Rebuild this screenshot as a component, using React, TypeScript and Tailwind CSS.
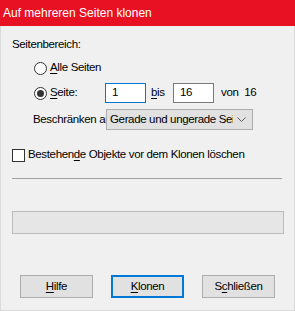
import React from "react";

const U = ({ children }: { children: React.ReactNode }) => (
  <span className="underline underline-offset-2 decoration-1">{children}</span>
);

export default function App() {
  return (
    <div
      className="w-[295px] h-[311px] bg-[#f0f0f0] flex flex-col text-[11.5px] tracking-[-0.35px] text-black leading-none border-x border-b border-[#dadada]"
      style={{ fontFamily: '"Liberation Sans", Arial, sans-serif' }}
    >
      <div className="h-[26px] bg-[#e81123] -mx-px flex items-center pl-[3px] text-white text-[12px] tracking-normal">
        Auf mehreren Seiten klonen
      </div>
      <div className="flex flex-col pl-[11px] pr-[11px]">
        <div className="mt-[12px] h-[13px] flex items-center">Seitenbereich:</div>
        <div className="mt-[10px] ml-[22px] flex items-center h-[14px]">
          <span className="w-[13px] h-[13px] rounded-full border border-[#333] bg-white" />
          <span className="ml-[3px]"><U>A</U>lle Seiten</span>
        </div>
        <div className="mt-[8px] ml-[22px] flex items-center h-[20px]">
          <span className="w-[13px] h-[13px] rounded-full border border-[#333] bg-white flex items-center justify-center">
            <span className="w-[7px] h-[7px] rounded-full bg-[#333]" />
          </span>
          <span className="ml-[3px] w-[55px]"><U>S</U>eite:</span>
          <div className="w-[41px] h-[20px] border border-[#0078d7] bg-white flex items-center pl-[6px]">1</div>
          <span className="ml-[5px] w-[21px]"><U>b</U>is</span>
          <div className="ml-[1px] w-[41px] h-[20px] border border-[#7a7a7a] bg-white flex items-center pl-[6px]">16</div>
          <span className="ml-[7px]">von&nbsp; 16</span>
        </div>
        <div className="mt-[6px] ml-[21px] flex items-center h-[21px]">
          <span className="w-[73px] overflow-hidden whitespace-nowrap">Besch<U>r</U>änken au</span>
          <div className="w-[147px] h-[21px] border border-[#adadad] bg-[#e1e1e1] flex items-center pl-[3px] pr-[6px]">
            <span className="flex-1 overflow-hidden whitespace-nowrap">Gerade und ungerade Sei</span>
            <svg width="9" height="6" viewBox="0 0 9 6" className="ml-[4px]">
              <path d="M0.5 0.5 L4.5 4.5 L8.5 0.5" fill="none" stroke="#606060" strokeWidth="1" />
            </svg>
          </div>
        </div>
        <div className="mt-[18px] flex items-center h-[14px]">
          <span className="w-[13px] h-[13px] border border-[#333] bg-white" />
          <span className="ml-[3px]">Bestehen<U>d</U>e Objekte vor dem Klonen löschen</span>
        </div>
        <div className="mt-[16px] h-px bg-[#a0a0a0] mr-[1px]" />
        <div className="mt-[32px] h-[23px] border border-[#bcbcbc] bg-[#e6e6e6] -mr-px" />
      </div>
      <div className="mt-auto mb-[12px] flex justify-center gap-[18px]">
        <button className="w-[73px] h-[23px] border border-[#adadad] bg-[#e1e1e1] flex items-center justify-center">
          <span><U>H</U>ilfe</span>
        </button>
        <button className="w-[73px] h-[23px] border-2 border-[#0078d7] bg-[#e1e1e1] flex items-center justify-center">
          <span><U>K</U>lonen</span>
        </button>
        <button className="w-[73px] h-[23px] border border-[#adadad] bg-[#e1e1e1] flex items-center justify-center">
          <span>S<U>c</U>hließen</span>
        </button>
      </div>
    </div>
  );
}
